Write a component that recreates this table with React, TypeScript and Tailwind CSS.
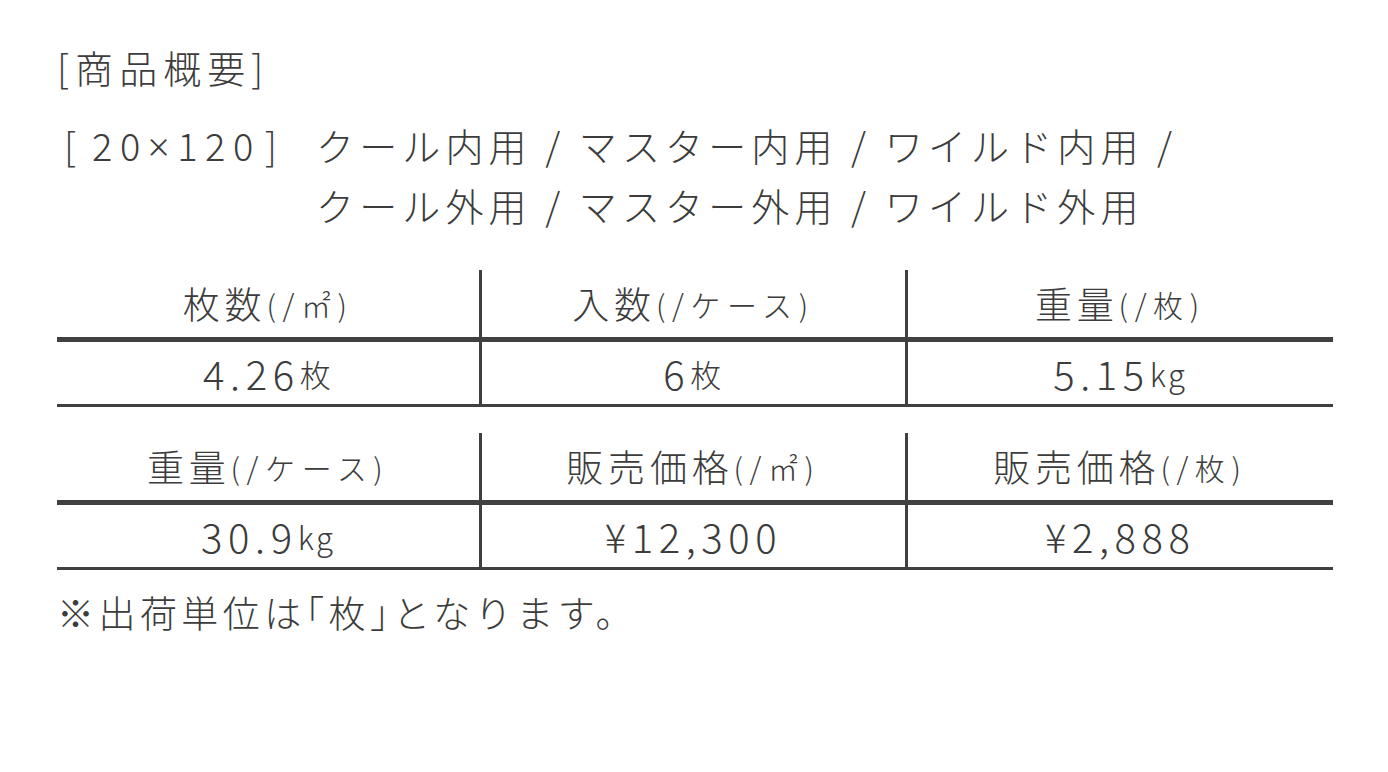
const font = { fontFamily: '"Noto Sans CJK JP", "Noto Sans", sans-serif' };

type Cell = { label: string; unit: string; value: string; suffix?: string };

const table1: Cell[] = [
  { label: '枚数', unit: '(/㎡)', value: '4.26', suffix: '枚' },
  { label: '入数', unit: '(/ケース)', value: '6', suffix: '枚' },
  { label: '重量', unit: '(/枚)', value: '5.15', suffix: 'kg' },
];

const table2: Cell[] = [
  { label: '重量', unit: '(/ケース)', value: '30.9', suffix: 'kg' },
  { label: '販売価格', unit: '(/㎡)', value: '¥12,300' },
  { label: '販売価格', unit: '(/枚)', value: '¥2,888' },
];

function SpecTable({ cells }: { cells: Cell[] }) {
  return (
    <div className="w-[1276px]">
      <div className="grid grid-cols-3">
        {cells.map((c, i) => (
          <div
            key={i}
            className={`h-[67px] flex items-center justify-center ${i < 2 ? 'border-r-[3px] border-[#404040]' : ''}`}
          >
            <span className="text-[37px] tracking-[0.13em] leading-none">{c.label}</span>
            <span className="text-[30px] tracking-[0.22em] leading-none">{c.unit}</span>
          </div>
        ))}
      </div>
      <div className="h-[5px] bg-[#404040]" />
      <div className="grid grid-cols-3">
        {cells.map((c, i) => (
          <div
            key={i}
            className={`h-[62px] flex items-center justify-center ${i < 2 ? 'border-r-[3px] border-[#404040]' : ''}`}
          >
            <span className="text-[40px] tracking-[0.14em] leading-none">{c.value}</span>
            {c.suffix && <span className="text-[31px] tracking-[0.08em] leading-none">{c.suffix}</span>}
          </div>
        ))}
      </div>
      <div className="h-[3px] bg-[#404040]" />
    </div>
  );
}

export default function App() {
  return (
    <div className="w-[1388px] h-[772px] bg-white text-[#3c3c3c] font-light pl-[57px] pt-[43px]" style={font}>
      {/* Title */}
      <h2 className="text-[38px] leading-[48px] tracking-[0.16em] font-light">[商品概要]</h2>

      {/* Sizes / series */}
      <div className="flex mt-[24px] text-[38px] leading-[60px] tracking-[0.135em]">
        <div className="w-[259px] shrink-0 flex">
          <span className="ml-[7px] tracking-normal">[</span>
          <span className="ml-[16px] tracking-[0.2em]">
            20<span style={{ fontFamily: '"Noto Sans", sans-serif' }}>×</span>120
          </span>
          <span className="ml-[4px]">]</span>
        </div>
        <div>
          <div>クール内用 / マスター内用 / ワイルド内用 /</div>
          <div>クール外用 / マスター外用 / ワイルド外用</div>
        </div>
      </div>

      {/* Tables */}
      <div className="mt-[35px]">
        <SpecTable cells={table1} />
      </div>
      <div className="mt-[26px]">
        <SpecTable cells={table2} />
      </div>

      <p className="mt-[18px] text-[37px] leading-[48px] tracking-[0.12em]">
        ※出荷単位は<span className="[font-feature-settings:'halt']">「</span>枚<span className="[font-feature-settings:'halt']">」</span>となります。
      </p>
    </div>
  );
}
